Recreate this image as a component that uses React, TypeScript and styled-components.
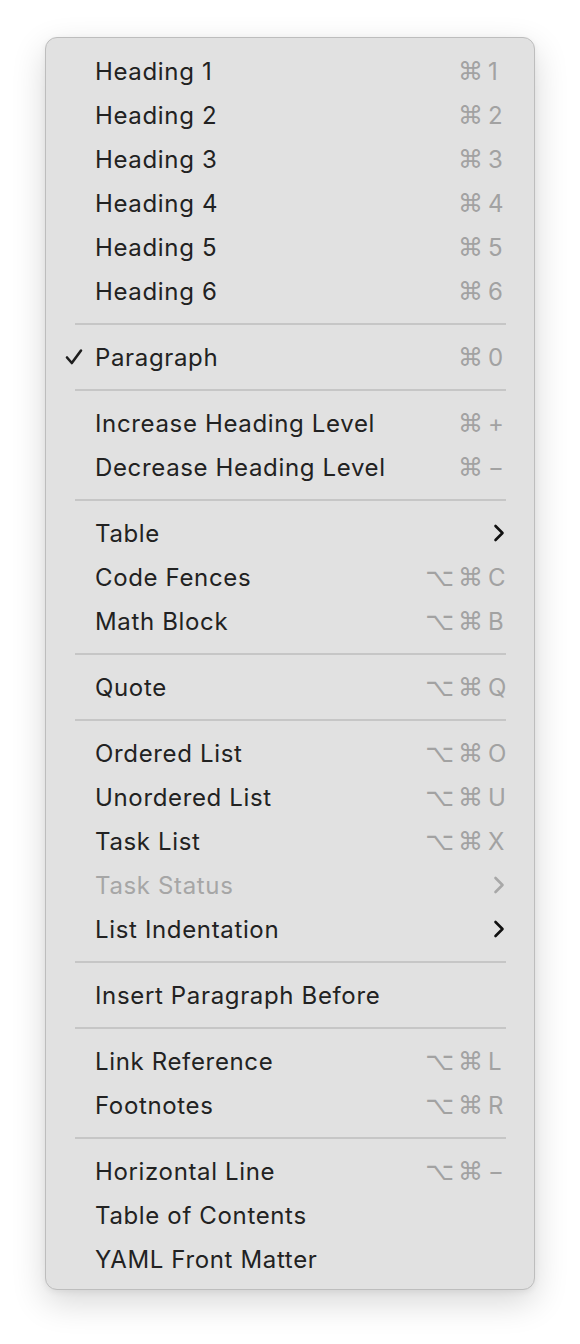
import React from "react";
import styled, { createGlobalStyle } from "styled-components";

const Global = createGlobalStyle`
  html, body { margin: 0; padding: 0; background: #ffffff; }
  body { font-family: Inter, "Noto Sans", "DejaVu Sans", sans-serif; }
`;

const Page = styled.div`
  width: 580px;
  height: 1344px;
  padding: 37px 0 0 45px;
  box-sizing: border-box;
`;

const Menu = styled.div`
  width: 490px;
  box-sizing: border-box;
  background: #e1e1e1;
  border: 1px solid #bdbdbd;
  border-radius: 12px;
  box-shadow: 0 12px 34px rgba(0, 0, 0, 0.16), 0 2px 6px rgba(0, 0, 0, 0.06);
  padding: 11px 0 8px;
  display: flex;
  flex-direction: column;
`;

const Row = styled.div<{ $disabled?: boolean }>`
  height: 44px;
  display: flex;
  align-items: center;
  padding: 0 29px 0 19px;
  color: ${(p) => (p.$disabled ? "#a6a6a6" : "#222222")};
  font-size: 24px;
`;

const CheckCol = styled.div`
  width: 30px;
  display: flex;
  align-items: center;
  justify-content: flex-start;
  flex-shrink: 0;
`;

const Label = styled.span`
  flex: 1;
  white-space: nowrap;
  letter-spacing: 0.65px;
`;

const Shortcut = styled.div`
  display: flex;
  align-items: center;
  color: #a2a2a2;
  font-size: 24px;
`;

const Mod = styled.span`
  font-family: "DejaVu Sans", sans-serif;
  font-size: 25px;
  margin-left: 4px;
`;

const Key = styled.span`
  width: 17px;
  margin-left: 5px;
  text-align: left;
`;

const Sep = styled.div`
  height: 22px;
  display: flex;
  align-items: center;
  padding: 0 28px 0 29px;
  &::after {
    content: "";
    flex: 1;
    height: 2px;
    background: #c6c6c6;
  }
`;

const Chevron = ({ color }: { color: string }) => (
  <svg width="12" height="18" viewBox="0 0 12 18">
    <path d="M2.5 2 L9.5 9 L2.5 16" fill="none" stroke={color} strokeWidth="2.6" strokeLinecap="round" strokeLinejoin="round" />
  </svg>
);

const Check = () => (
  <svg width="18" height="18" viewBox="0 0 18 18">
    <path d="M2 9.5 L6.8 15 L16 2.5" fill="none" stroke="#1e1e1e" strokeWidth="2.6" strokeLinecap="round" strokeLinejoin="round" />
  </svg>
);

type Item = {
  label?: string;
  mods?: string[];
  key?: string;
  sub?: boolean;
  disabled?: boolean;
  checked?: boolean;
  sep?: boolean;
};

const C = ["⌘"];
const OC = ["⌥", "⌘"];

const items: Item[] = [
  { label: "Heading 1", mods: C, key: "1" },
  { label: "Heading 2", mods: C, key: "2" },
  { label: "Heading 3", mods: C, key: "3" },
  { label: "Heading 4", mods: C, key: "4" },
  { label: "Heading 5", mods: C, key: "5" },
  { label: "Heading 6", mods: C, key: "6" },
  { sep: true },
  { label: "Paragraph", mods: C, key: "0", checked: true },
  { sep: true },
  { label: "Increase Heading Level", mods: C, key: "+" },
  { label: "Decrease Heading Level", mods: C, key: "−" },
  { sep: true },
  { label: "Table", sub: true },
  { label: "Code Fences", mods: OC, key: "C" },
  { label: "Math Block", mods: OC, key: "B" },
  { sep: true },
  { label: "Quote", mods: OC, key: "Q" },
  { sep: true },
  { label: "Ordered List", mods: OC, key: "O" },
  { label: "Unordered List", mods: OC, key: "U" },
  { label: "Task List", mods: OC, key: "X" },
  { label: "Task Status", sub: true, disabled: true },
  { label: "List Indentation", sub: true },
  { sep: true },
  { label: "Insert Paragraph Before" },
  { sep: true },
  { label: "Link Reference", mods: OC, key: "L" },
  { label: "Footnotes", mods: OC, key: "R" },
  { sep: true },
  { label: "Horizontal Line", mods: OC, key: "−" },
  { label: "Table of Contents" },
  { label: "YAML Front Matter" },
];

export default function App() {
  return (
    <>
      <Global />
      <Page>
        <Menu>
          {items.map((it, i) =>
            it.sep ? (
              <Sep key={i} />
            ) : (
              <Row key={i} $disabled={it.disabled}>
                <CheckCol>{it.checked ? <Check /> : null}</CheckCol>
                <Label>{it.label}</Label>
                {it.mods ? (
                  <Shortcut>
                    {it.mods.map((m, j) => (
                      <Mod key={j}>{m}</Mod>
                    ))}
                    <Key>{it.key}</Key>
                  </Shortcut>
                ) : null}
                {it.sub ? <Chevron color={it.disabled ? "#a8a8a8" : "#111111"} /> : null}
              </Row>
            )
          )}
        </Menu>
      </Page>
    </>
  );
}
